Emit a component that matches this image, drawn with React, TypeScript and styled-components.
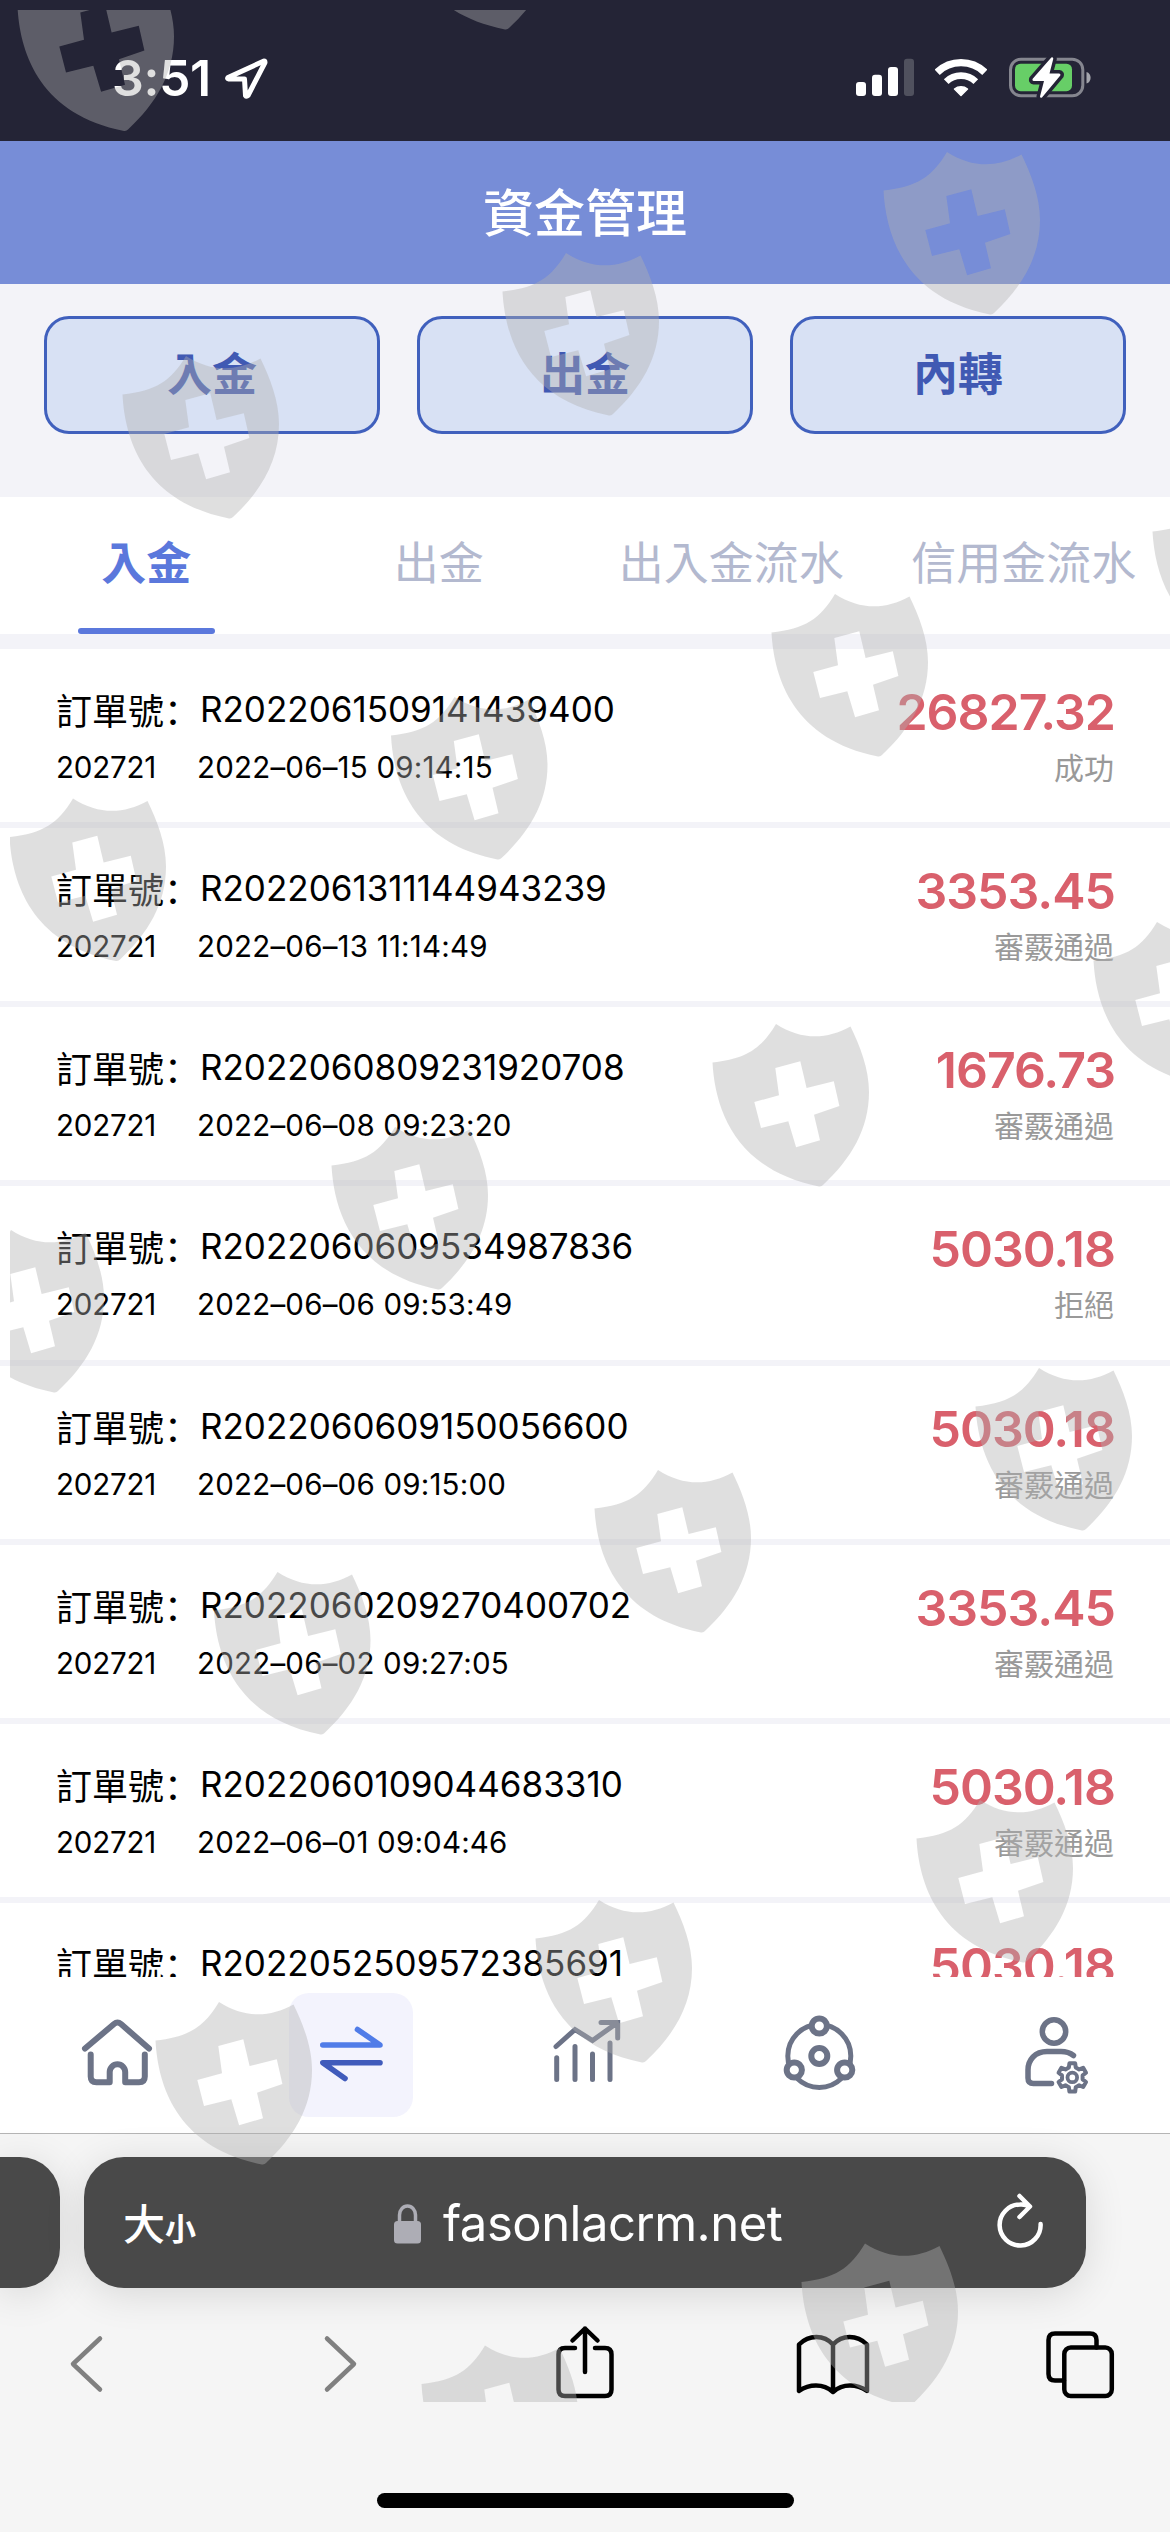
import React from 'react';
import styled, { createGlobalStyle } from 'styled-components';

interface OrderItem {
  orderNo: string,
  amount: string,
  time?: string,
  status?: string,
}

const ACCOUNT = '202721';

const orders: OrderItem[] = [
  { orderNo: 'R2022061509141439400', time: '2022–06–15 09:14:15', amount: '26827.32', status: '成功' },
  { orderNo: 'R2022061311144943239', time: '2022–06–13 11:14:49', amount: '3353.45', status: '審覈通過' },
  { orderNo: 'R2022060809231920708', time: '2022–06–08 09:23:20', amount: '1676.73', status: '審覈通過' },
  { orderNo: 'R2022060609534987836', time: '2022–06–06 09:53:49', amount: '5030.18', status: '拒絕' },
  { orderNo: 'R2022060609150056600', time: '2022–06–06 09:15:00', amount: '5030.18', status: '審覈通過' },
  { orderNo: 'R2022060209270400702', time: '2022–06–02 09:27:05', amount: '3353.45', status: '審覈通過' },
  { orderNo: 'R2022060109044683310', time: '2022–06–01 09:04:46', amount: '5030.18', status: '審覈通過' },
  { orderNo: 'R2022052509572385691', amount: '5030.18' }
];

const actions = ['入金', '出金', '內轉'];
const tabs = ['入金', '出金', '出入金流水', '信用金流水'];

// top left peak of every shield
const shields = [
  [81, -31.5], [462, -133],
  [947, 152], [566, 253], [186, 356],
  [1216, 493], [835, 594], [454.5, 697], [73, 798.5],
  [1157, 922], [776, 1024], [395, 1127], [11, 1230],
  [1039, 1368], [658, 1470], [277.5, 1572],
  [980, 1800], [599, 1900], [219, 2002],
  [865, 2243.5], [485, 2345.5]
];

const SHIELD_PATH = 'M0 0C25 16 50 16 74.5 2.5C84 22 93 45 93 68C93 105 75 135 47 161Q45.500 162.800 43 162.400C-41 146 -61 85 -63.500 38.500C-30 35 -15 25 0 0Z' +
  'M-.7 44L3 71.300L-21.700 78L-15 104L12.300 97.300L20.100 123.300L44 116.300L38 90.700L63.400 82L57.800 57.300L30.600 64L24.300 37.300Z';

const gearPath = (cx: number, cy: number, teeth: number, outer: number, inner: number) => {
  const step = (Math.PI * 2) / teeth;
  const points: string[] = [];

  for (let i = 0; i < teeth; i++) {
    const mid = i * step - Math.PI / 2;

    [[-0.32, inner], [-0.19, outer], [0.19, outer], [0.32, inner]].forEach(([offset, radius]) => {
      const angle = mid + offset * step;

      points.push(`${(cx + radius * Math.cos(angle)).toFixed(2)} ${(cy + radius * Math.sin(angle)).toFixed(2)}`);
    });
  }

  return `M${points.join('L')}Z`;
};

const GlobalStyle = createGlobalStyle`
  * {
    box-sizing: border-box;
  }

  body {
    margin: 0;
    background: #f3f3f8;
    font-family: Inter, 'Noto Sans CJK TC', sans-serif;
  }
`;

const Screen = styled.div`
  position: relative;
  display: flex;
  flex-direction: column;
  width: 1170px;
  height: 2532px;
  overflow: hidden;
  background: #f3f3f8;
`;

const Watermark = styled.svg`
  position: absolute;
  top: 10px;
  left: 10px;
  width: 1160px;
  height: 2392px;
  fill: rgba(176, 176, 176, 0.406);
  pointer-events: none;
`;

const StatusBar = styled.div`
  display: flex;
  flex: none;
  align-items: center;
  justify-content: space-between;
  height: 141px;
  padding: 15px 78px 0 112px;
  background: #242436;
`;

const Clock = styled.div`
  display: flex;
  align-items: center;
  gap: 14px;
  color: #fff;
  font-size: 50px;
  font-weight: 600;
  line-height: 60px;
  letter-spacing: -0.4px;
`;

const StatusIcons = styled.div`
  display: flex;
  align-items: center;
  gap: 21px;
`;

const Header = styled.div`
  flex: none;
  height: 143px;
  background: #778dd7;
  color: #fff;
  font-size: 51px;
  font-weight: 500;
  line-height: 145px;
  text-align: center;
`;

const Actions = styled.div`
  display: flex;
  flex: none;
  gap: 37px;
  height: 213px;
  padding: 32px 44px 0;
`;

const ActionButton = styled.button`
  flex: 1;
  height: 118px;
  padding: 0;
  border: 3px solid #4060bd;
  border-radius: 25px;
  background: #d8e1f4;
  color: #4059b3;
  font-family: inherit;
  font-size: 45px;
  font-weight: 700;
  line-height: 112px;
`;

const Tabs = styled.div`
  display: flex;
  flex: none;
  height: 137px;
  background: #fff;
`;

const Tab = styled.div<{ $active?: boolean }>`
  display: flex;
  flex: 1;
  flex-direction: column;
  align-items: center;
  justify-content: space-between;
  padding-top: 3px;
  color: ${({ $active }) => ($active ? '#5b78dc' : '#b3b9cf')};
  font-size: 45px;
  font-weight: ${({ $active }) => ($active ? 700 : 400)};
  line-height: 128px;
  white-space: nowrap;

  &::after {
    width: 137px;
    height: 6px;
    border-radius: 3px;
    background: ${({ $active }) => ($active ? '#5b78dc' : 'transparent')};
    content: '';
  }
`;

const List = styled.div`
  display: flex;
  flex: none;
  flex-direction: column;
  gap: 6px;
  height: 1328px;
  margin-top: 15px;
  overflow: hidden;
`;

const Row = styled.div`
  display: flex;
  flex: none;
  justify-content: space-between;
  height: 173.14px;
  padding: 35px 56px 0 56px;
  background: #fff;
`;

const RowMain = styled.div`
  display: flex;
  flex-direction: column;
  color: #000;
`;

const OrderLine = styled.div`
  display: flex;
  height: 50px;
  font-size: 35px;
  line-height: 50px;
  white-space: nowrap;
`;

const OrderLabel = styled.span`
  width: 144px;
  font-family: 'Noto Sans CJK TC', sans-serif;
  font-size: 36px;
`;

const Colon = styled.span`
  font-family: 'Noto Sans CJK SC', sans-serif;
`;

const MetaLine = styled.div`
  display: flex;
  margin-top: 10px;
  font-size: 29.5px;
  line-height: 46px;
  letter-spacing: 0.2px;
`;

const Account = styled.span`
  width: 141px;
  letter-spacing: -0.2px;
`;

const RowSide = styled.div`
  display: flex;
  flex-direction: column;
  align-items: flex-end;
`;

const Amount = styled.div`
  height: 60px;
  margin-top: -2px;
  margin-right: -1px;
  color: #d9606c;
  font-size: 50px;
  font-weight: 600;
  line-height: 60px;
  letter-spacing: -1px;
`;

const Status = styled.div`
  margin-top: 1px;
  color: #999;
  font-size: 30px;
  line-height: 50px;
`;

const NavBar = styled.div`
  display: flex;
  flex: none;
  height: 156px;
  padding-top: 16px;
  background: #fff;
`;

const NavItem = styled.div`
  display: flex;
  flex: 1;
  justify-content: center;
`;

const NavTile = styled.div<{ $active?: boolean }>`
  display: flex;
  align-items: center;
  justify-content: center;
  width: 124px;
  height: 124px;
  border-radius: 20px;
  background: ${({ $active }) => ($active ? '#f3f3fd' : 'transparent')};
`;

const NavIcon = styled.svg`
  width: 100px;
  height: 100px;
  fill: none;
  stroke: #6c7387;
  stroke-width: 6;
  stroke-linecap: round;
  stroke-linejoin: round;
`;

const Browser = styled.div`
  display: flex;
  flex: 1;
  flex-direction: column;
  border-top: 1px solid #b5b5b5;
  background: #f5f5f5;
`;

const AddressRow = styled.div`
  display: flex;
  gap: 24px;
  height: 131px;
  margin-top: 23px;
`;

const AddressBar = styled.div`
  display: flex;
  align-items: center;
  width: 1002px;
  height: 131px;
  padding: 0 41px 0 39px;
  border-radius: 40px;
  background: #494949;
  box-shadow: 0 6px 40px rgba(0, 0, 0, 0.12);
  color: #fff;
`;

const PreviousTab = styled.div`
  width: 60px;
  height: 131px;
  border-radius: 0 40px 40px 0;
  background: #494949;
  box-shadow: 0 6px 40px rgba(0, 0, 0, 0.12);
`;

const TextSize = styled.div`
  display: flex;
  align-items: baseline;
  width: 271px;
  padding-top: 3px;
  font-family: 'Noto Sans CJK TC', sans-serif;
  font-size: 42px;
  font-weight: 500;
  line-height: 60px;

  small {
    font-size: 31px;
    font-weight: 700;
  }
`;

const Domain = styled.div`
  display: flex;
  flex: 1;
  align-items: center;
  gap: 22px;
  padding-top: 2px;
  font-size: 49px;
  line-height: 60px;
  letter-spacing: -0.5px;
`;

const ToolBar = styled.div`
  display: grid;
  grid-template-columns: repeat(5, 1fr);
  align-items: center;
  justify-items: center;
  height: 80px;
  margin: 36px -34px 0;
`;

const ToolIcon = styled.svg<{ $muted?: boolean }>`
  overflow: visible;
  fill: none;
  stroke: ${({ $muted }) => ($muted ? '#808080' : '#000')};
  stroke-width: 4.5;
  stroke-linecap: round;
  stroke-linejoin: round;
`;

const HomeIndicator = styled.div`
  width: 417px;
  height: 15px;
  margin: 89px auto 0;
  border-radius: 8px;
  background: #000;
`;

const SignalIcon = () => (
  <svg height='40' viewBox='0 0 58 40' width='58'>
    <g fill='#fff'>
      <rect height='14' rx='3' width='10' y='24' />
      <rect height='21.300' rx='3' width='10' x='16' y='16.700' />
      <rect height='29' rx='3' width='10' x='32' y='9' />
    </g>
    <rect fill='#50515e' height='37.200' rx='3' width='10' x='48' y='.8' />
  </svg>
);

const WifiIcon = () => (
  <svg height='40' viewBox='0 0 52 40' width='52'>
    <g fill='none' stroke='#fff'>
      <path d='M2.200 14.300A34.300 34.300 0 0 1 49.800 14.300' strokeWidth='7.300' />
      <path d='M11.200 23.700A21.300 21.300 0 0 1 40.800 23.700' strokeWidth='6.700' />
    </g>
    <path d='M19.500 31A10.500 10.500 0 0 1 32.500 31L26 37.500Z' fill='#fff' stroke='#fff' strokeLinejoin='round' strokeWidth='1.500' />
  </svg>
);

const BatteryIcon = () => (
  <svg height='44' viewBox='0 0 84 44' width='84'>
    <rect fill='none' height='36.600' rx='10.500' stroke='#85868f' strokeWidth='3' width='72.300' x='2.500' y='3.200' />
    <path d='M78.500 16c5.500 1.500 5.500 10 0 11.500Z' fill='#a5a6ad' />
    <rect fill='#67ce67' height='27.500' rx='5.500' width='57' x='7' y='7.700' />
    <path
      d='M43.300 1.500L24.700 22.800Q23.800 24.800 25.800 25H36L32 40.500Q32.300 42.500 34.200 41.200L52.300 19.500Q53 17.600 51.200 17.400H41.500L45.300 2.800Q45.200 .6 43.300 1.500Z'
      fill='#fff'
      paintOrder='stroke'
      stroke='#242436'
      strokeWidth='7'
    />
  </svg>
);

const LocationIcon = () => (
  <svg fill='none' height='44' stroke='#fff' strokeLinejoin='round' strokeWidth='5' viewBox='0 0 44 44' width='44'>
    <path d='M39 5L3 21.500Q2 22.500 3.500 23H19.500L20.500 39.500Q21.500 41 23 39.500L40 6.500Q40 5 39 5Z' />
  </svg>
);

const navIcons: React.ReactNode[] = [
  <>
    <path d='M18 43.500L47 19q3.500-3 7 0L82 43.500' />
    <path d='M23.700 49.500V71.500q0 5.800 5.800 5.800H42.700V67a7.750 7.750 0 0 1 15.500 0V77.300H72q5.800 0 5.800-5.800V49.500' />
  </>,
  <g strokeWidth='5.600'>
    <path d='M21.800 40H79L56.500 24.500' stroke='#507ce8' />
    <path d='M79 57.700H21.800L44 73.500' stroke='#405bbb' />
  </g>,
  <g strokeWidth='5'>
    <path d='M21.700 52.800V74.500M40 41.500V74.500M57.500 49V74.500M75 38V74.500' />
    <path d='M21 41.500L40 24.500L57.500 35.500L82 18M66 17.500H82.700V33' strokeLinejoin='miter' />
  </g>,
  <g strokeWidth='5'>
    <circle cx='50.300' cy='51' r='31.500' />
    <g fill='#fff' strokeWidth='6'>
      <circle cx='50.300' cy='21' r='7.600' />
      <circle cx='25.300' cy='65' r='7.600' />
      <circle cx='75.700' cy='65' r='7.600' />
      <circle cx='50.300' cy='51' r='8' />
    </g>
  </g>,
  <g strokeWidth='5.500'>
    <circle cx='51' cy='26.500' r='11.700' />
    <path d='M70.500 50.500Q65.500 46.500 58 46.500H44C32 46.500 25 55 25 65V73q0 5.400 5.400 5.400H48.500' />
    <path d={gearPath(69.3, 72.4, 6, 14.5, 10.5)} strokeWidth='4' />
    <circle cx='69.300' cy='72.400' r='4.800' strokeWidth='3.800' />
  </g>
];

const OrderRow: React.FC<OrderItem> = ({ amount, orderNo, status, time }: OrderItem) => {
  return (
    <Row>
      <RowMain>
        <OrderLine>
          <OrderLabel>訂單號<Colon>：</Colon></OrderLabel>
          <span>{orderNo}</span>
        </OrderLine>
        {time && (
          <MetaLine>
            <Account>{ACCOUNT}</Account>
            <span>{time}</span>
          </MetaLine>
        )}
      </RowMain>
      <RowSide>
        <Amount>{amount}</Amount>
        {status && <Status>{status}</Status>}
      </RowSide>
    </Row>
  );
};

const App: React.FC = () => {
  return (
    <Screen>
      <GlobalStyle />
      <StatusBar>
        <Clock>
          3:51
          <LocationIcon />
        </Clock>
        <StatusIcons>
          <SignalIcon />
          <WifiIcon />
          <BatteryIcon />
        </StatusIcons>
      </StatusBar>

      <Header>資金管理</Header>

      <Actions>
        {actions.map((label) => (
          <ActionButton key={label}>{label}</ActionButton>
        ))}
      </Actions>

      <Tabs>
        {tabs.map((label, index) => (
          <Tab
            $active={index === 0}
            key={label}
          >
            {label}
          </Tab>
        ))}
      </Tabs>

      <List>
        {orders.map((order) => (
          <OrderRow
            key={order.orderNo}
            {...order}
          />
        ))}
      </List>

      <NavBar>
        {navIcons.map((icon, index) => (
          <NavItem key={index}>
            <NavTile $active={index === 1}>
              <NavIcon viewBox='0 0 100 100'>{icon}</NavIcon>
            </NavTile>
          </NavItem>
        ))}
      </NavBar>

      <Browser>
        <AddressRow>
          <PreviousTab />
          <AddressBar>
            <TextSize>大<small>小</small></TextSize>
            <Domain>
              <svg height='40' viewBox='0 0 27 40' width='27'>
                <path d='M5.500 18V11a8 9 0 0 1 16 0V18' fill='none' stroke='#adadb5' strokeWidth='3.500' />
                <rect fill='#adadb5' height='22.500' rx='3.500' width='27' y='17' />
              </svg>
              fasonlacrm.net
            </Domain>
            <ToolIcon height='56' viewBox='0 0 50 56' width='50'>
              <path d='M45.600 29A20.500 20.500 0 1 1 25 9.500Q30 9 34.500 11.500M24.500 1L35 11.500L24.500 22' stroke='#fff' />
            </ToolIcon>
          </AddressBar>
        </AddressRow>

        <ToolBar>
          <ToolIcon $muted height='56' viewBox='0 0 40 56' width='40'>
            <path d='M30 2.500L3 28L30 53.500' />
          </ToolIcon>
          <ToolIcon $muted height='56' viewBox='0 0 40 56' width='40'>
            <path d='M10 2.500L37 28L10 53.500' />
          </ToolIcon>
          <ToolIcon height='76' viewBox='0 0 58 76' width='58'>
            <path d='M19 22H9Q2.500 22 2.500 28.500V63.500Q2.500 70 9 70H49Q55.500 70 55.500 63.500V28.500Q55.500 22 49 22H39' />
            <path d='M29 46V2.500M16.500 14.500L29 2.500L41.500 14.500' />
          </ToolIcon>
          <ToolIcon height='60' viewBox='0 0 72 60' width='72'>
            <path d='M36 58C26 49 12 50 2 57V10.500C12 .5 27 .5 36 10.500C45 .5 60 .5 70 10.500V57C60 50 46 49 36 58ZM36 10.500V57' />
          </ToolIcon>
          <ToolIcon height='66' viewBox='0 0 68 66' width='68'>
            <path d='M18 49.500H9Q2.500 49.500 2.500 43V9Q2.500 2.500 9 2.500H44Q50.500 2.500 50.500 9V16.500' />
            <rect height='48.500' rx='6.500' width='47.500' x='18.300' y='16.500' />
          </ToolIcon>
        </ToolBar>

        <HomeIndicator />
      </Browser>

      <Watermark viewBox='10 10 1160 2392'>
        {shields.map(([x, y]) => (
          <path
            d={SHIELD_PATH}
            fillRule='evenodd'
            key={`${x}-${y}`}
            transform={`translate(${x} ${y})`}
          />
        ))}
      </Watermark>
    </Screen>
  );
};

export default App;
